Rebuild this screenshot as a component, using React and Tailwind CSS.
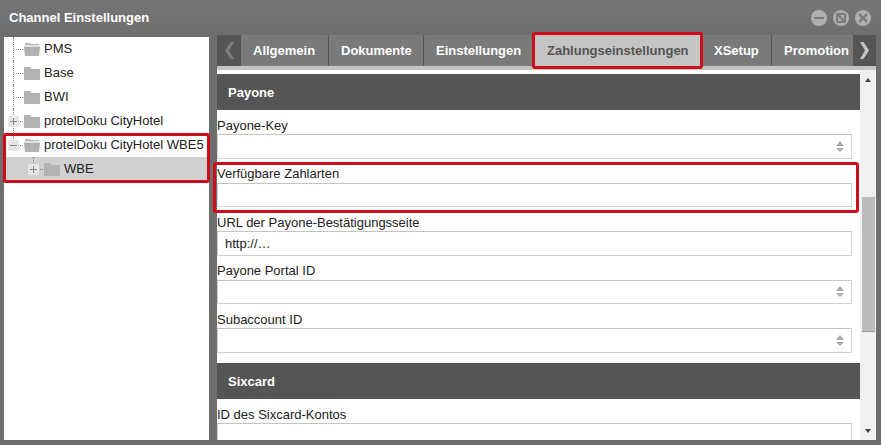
const tabs = [
  { label: "Allgemein", width: "w-[88px]", pad: "pl-3" },
  { label: "Dokumente", width: "w-[95px]", pad: "pl-3" },
  { label: "Einstellungen", width: "w-[110px]", pad: "pl-3" },
  { label: "Zahlungseinstellungen", width: "w-[169px]", pad: "pl-[13px]", active: true },
  { label: "XSetup", width: "w-[69px]", pad: "pl-[11px]" },
  { label: "Promotion", width: "w-[90px]", pad: "pl-3" },
];

function Folder({ open }) {
  if (open) {
    return (
      <svg width="16" height="13" viewBox="0 0 16 13" className="shrink-0">
        <path d="M1 0h5l1 1h8v1H1z" fill="#b8b8b8" />
        <path d="M0 2h16v2H0z" fill="#e2e2e2" />
        <path d="M0 4h16l-1 9H1z" fill="#b0b0b0" />
      </svg>
    );
  }
  return (
    <svg width="16" height="13" viewBox="0 0 16 13" className="shrink-0">
      <path d="M0 0h6l2 2h8v11H0z" fill="#b2b2b2" />
    </svg>
  );
}

function Expander({ minus }) {
  return (
    <span className="relative flex h-[11px] w-[11px] items-center justify-center bg-[#e6e6e6]">
      <span className="h-px w-[7px] bg-[#8a8a8a]" />
      {!minus && <span className="absolute h-[7px] w-px bg-[#8a8a8a]" />}
    </span>
  );
}

function TreeRow({ label, open, expander, minus, child, selected, last }) {
  return (
    <div className={`flex h-6 items-center ${selected ? "bg-[#d0d0d0]" : ""}`}>
      <div className={`relative flex h-full shrink-0 items-center ${child ? "w-[40px] pl-[24px]" : "w-[20px] pl-[4px]"}`}>
        <span className={`absolute top-0 border-l border-dotted border-[#888] ${last ? "h-1/2" : "h-full"} ${child ? "left-[29px]" : "left-[9px]"}`} />
        <span className={`absolute top-1/2 w-[9px] border-t border-dotted border-[#888] ${child ? "left-[30px]" : "left-[10px]"}`} />
        {expander && <span className="relative"><Expander minus={minus} /></span>}
      </div>
      <Folder open={open} />
      <span className="ml-1 whitespace-nowrap">{label}</span>
    </div>
  );
}

function Spinner() {
  return (
    <span className="flex flex-col gap-[2px]">
      <span className="h-0 w-0 border-x-[4.5px] border-b-[5px] border-x-transparent border-b-[#aaa]" />
      <span className="h-0 w-0 border-x-[4.5px] border-t-[4px] border-x-transparent border-t-[#aaa]" />
    </span>
  );
}

function Field({ label, value, spinner }) {
  return (
    <div className="w-[635px] shrink-0">
      <div className="flex h-[24px] items-end pb-[0.5px] leading-[16px] whitespace-nowrap">{label}</div>
      <div className="flex h-[24.5px] items-center justify-between border border-[#d2d2d2] border-t-[#c4c4c4] pl-[7px] pr-[7px]">
        <span>{value}</span>
        {spinner && <Spinner />}
      </div>
    </div>
  );
}

function SectionHeader({ title }) {
  return (
    <div className="flex h-9 shrink-0 items-center bg-[#555] pl-[11px] pt-[1px] text-[13px] font-bold text-white">{title}</div>
  );
}

function WinButton({ children }) {
  return (
    <span className="flex h-4 w-4 items-center justify-center rounded-full bg-[#b0b0b0]">{children}</span>
  );
}

export default function App() {
  return (
    <div
      className="flex h-[445px] w-[881px] flex-col overflow-hidden bg-[#6e6e6e] text-[13px] text-[#222]"
      style={{ fontFamily: '"Liberation Sans", Arial, sans-serif' }}
    >
      <div className="flex h-[35px] shrink-0 items-center justify-between bg-gradient-to-b from-[#767676] to-[#6e6e6e] pl-[9px] pr-[10px] pt-[1px]">
        <span className="text-[13px] font-bold text-white">Channel Einstellungen</span>
        <div className="flex items-center gap-[6px]">
          <WinButton><span className="h-[2px] w-[10px] bg-[#7a7a7a]" /></WinButton>
          <WinButton>
            <svg width="12" height="12" viewBox="0 0 12 12">
              <rect x="2" y="2" width="8" height="8" rx="1" fill="none" stroke="#7a7a7a" strokeWidth="2" />
              <path d="M2 2l8 8" stroke="#7a7a7a" strokeWidth="2" />
            </svg>
          </WinButton>
          <WinButton>
            <svg width="12" height="12" viewBox="0 0 12 12">
              <path d="M2 2l8 8M10 2l-8 8" stroke="#7a7a7a" strokeWidth="2.4" />
            </svg>
          </WinButton>
        </div>
      </div>

      <div className="flex h-[405px] shrink-0 gap-2 px-1">
        {/* tree */}
        <div className="relative mt-[2px] h-[403px] w-[205px] shrink-0 bg-white">
          <TreeRow label="PMS" open />
          <TreeRow label="Base" />
          <TreeRow label="BWI" />
          <TreeRow label="protelDoku CityHotel" expander />
          <TreeRow label="protelDoku CityHotel WBE5" open expander minus last />
          <TreeRow label="WBE" child expander selected last />
          <div className="absolute left-[-1px] top-[96px] h-[50px] w-[207px] rounded-[3px] border-[3px] border-[#cc0d1b]" />
        </div>

        {/* panel */}
        <div className="relative flex h-[405px] w-[659px] flex-col">
          <div className="flex h-[31px] shrink-0">
            <div className="flex w-6 shrink-0 items-center justify-center bg-[#555]">
              <svg width="9" height="17" viewBox="0 0 9 17">
                <path d="M5.5 0H9L4 8.5 9 17H5.5L0 8.5z" fill="#7c7c7c" />
              </svg>
            </div>
            <div className="flex min-w-0 flex-1 overflow-hidden">
              {tabs.map((tab) => (
                <div
                  key={tab.label}
                  className={`flex ${tab.width} ${tab.pad} shrink-0 items-center rounded-t-[2px] border-r border-[#555] text-[13px] font-bold ${
                    tab.active ? "bg-[#c4c4c4] text-[#555]" : "bg-[#7a7a7a] text-white"
                  }`}
                >
                  {tab.label}
                </div>
              ))}
            </div>
            <div className="flex w-[23px] shrink-0 items-center justify-center bg-[#555]">
              <svg width="9" height="17" viewBox="0 0 9 17">
                <path d="M3.5 0H0L5 8.5 0 17H3.5L9 8.5z" fill="#c4c4c4" />
              </svg>
            </div>
          </div>
          <div className="h-[4px] shrink-0 bg-[#c4c4c4]" />
          <div className="flex min-h-0 flex-1 bg-white pt-1">
            <div className="flex w-[643px] flex-col overflow-hidden">
              <SectionHeader title="Payone" />
              <div className="flex shrink-0 flex-col pb-[10.5px]">
                <Field label="Payone-Key" spinner />
                <Field label="Verfügbare Zahlarten" />
                <Field label="URL der Payone-Bestätigungsseite" value="http://…" />
                <Field label="Payone Portal ID" spinner />
                <Field label="Subaccount ID" spinner />
              </div>
              <SectionHeader title="Sixcard" />
              <Field label="ID des Sixcard-Kontos" />
            </div>
            {/* scrollbar */}
            <div className="-mt-1 flex w-[16px] flex-col items-center bg-[#f0f0f0] pt-[8px] pb-[7px]">
              <span className="h-0 w-0 border-x-[3.5px] border-b-[4px] border-x-transparent border-b-[#444]" />
              <div className="mt-[115px] h-[135px] w-[13px] border-b border-[#999] bg-[#bcbcbc]" />
              <span className="mt-auto h-0 w-0 border-x-[3.5px] border-t-[4px] border-x-transparent border-t-[#444]" />
            </div>
          </div>

          {/* red highlights */}
          <div className="absolute left-[315px] top-[-3px] h-[37px] w-[171px] rounded-[3px] border-[3px] border-[#cc0d1b]" />
          <div className="absolute left-[-4px] top-[127px] h-[51px] w-[646px] rounded-[3px] border-[3px] border-[#cc0d1b]" />
        </div>
      </div>
    </div>
  );
}
